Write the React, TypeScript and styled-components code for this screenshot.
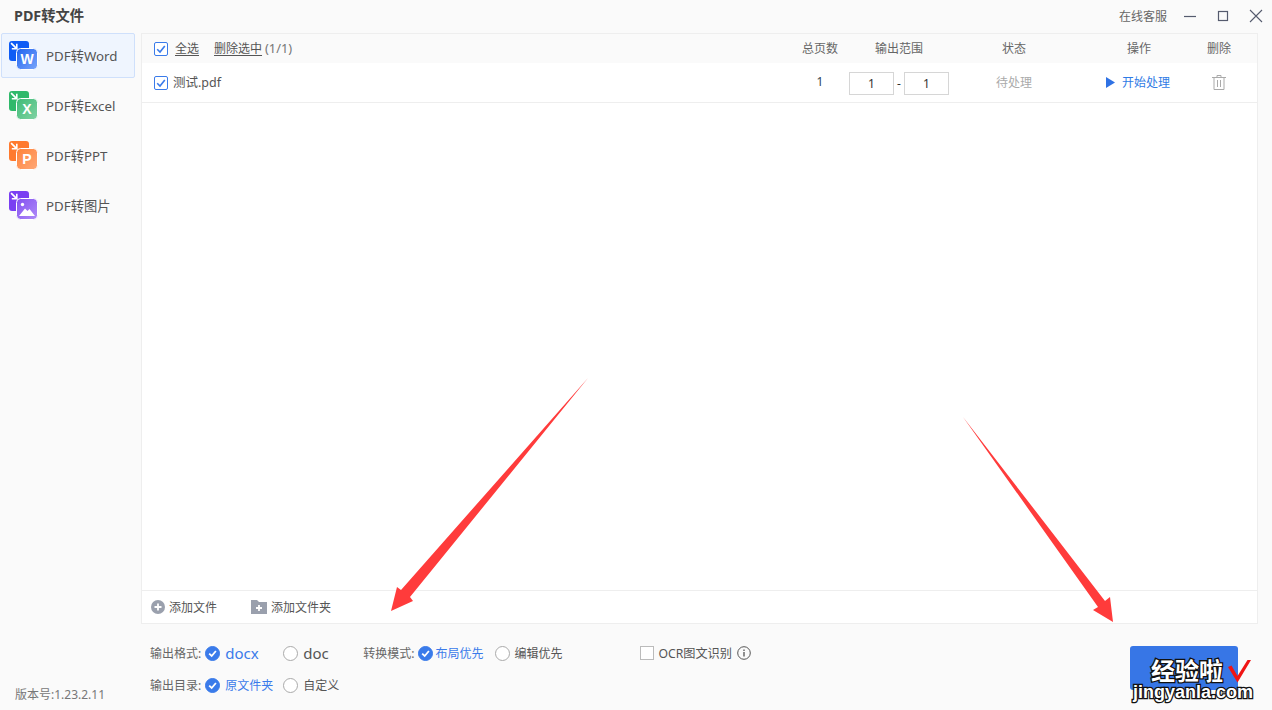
import React from 'react';
import styled, { createGlobalStyle } from 'styled-components';

const GlobalStyle = createGlobalStyle`
  html, body {
    margin: 0;
    padding: 0;
    background: #fafafa;
  }
  * {
    box-sizing: border-box;
  }
`;

const Window = styled.div`
  position: relative;
  width: 1272px;
  height: 710px;
  overflow: hidden;
  background: #fafafa;
  color: #555;
  font-family: 'Noto Sans', 'Noto Sans CJK SC', sans-serif;
  font-size: 12px;
`;

const TitleBar = styled.div`
  height: 33px;
  display: flex;
  align-items: center;
  justify-content: space-between;
  padding: 0 7px 2px 14px;
`;

const Title = styled.div`
  padding-bottom: 2px;
  font-size: 14.3px;
  font-weight: 700;
  color: #444;
`;

const WindowActions = styled.div`
  display: flex;
  align-items: center;
  color: #666;
`;

const ServiceLink = styled.span`
  margin-right: 14px;
  font-size: 12px;
`;

const WindowButton = styled.button`
  width: 18px;
  height: 18px;
  padding: 0;
  margin-left: 15px;
  border: 0;
  background: none;
  display: flex;
  align-items: center;
  justify-content: center;
  &:first-of-type {
    margin-left: 0;
  }
`;

const Body = styled.div`
  display: flex;
  height: 677px;
`;

const Sidebar = styled.div`
  width: 141px;
  padding-left: 1px;
  display: flex;
  flex-direction: column;
`;

const NavList = styled.div`
  flex: 1;
  display: flex;
  flex-direction: column;
  gap: 5px;
`;

const NavItem = styled.div<{ $active?: boolean }>`
  width: 134px;
  height: 45px;
  display: flex;
  align-items: center;
  gap: 8px;
  padding-left: 7px;
  font-size: 13.3px;
  color: #555;
  border-radius: 2px;
  border: 1px solid ${(p) => (p.$active ? '#cfe0fb' : 'transparent')};
  background: ${(p) => (p.$active ? '#eff5fe' : 'transparent')};
`;

const Version = styled.div`
  padding: 0 0 7px 14px;
  font-size: 12px;
  color: #777;
`;

const Content = styled.div`
  width: 1117px;
  display: flex;
  flex-direction: column;
`;

const Panel = styled.div`
  height: 591px;
  display: flex;
  flex-direction: column;
  background: #fff;
  border: 1px solid #eee;
`;

const Columns = '647px 60px 100px 130px 120px 40px';

const HeaderRow = styled.div`
  height: 29px;
  display: grid;
  grid-template-columns: ${Columns};
  align-items: center;
  background: #fafafa;
  color: #666;
  font-size: 12px;
  text-align: center;
`;

const HeaderCell = styled.span<{ $shift?: number }>`
  padding-left: ${(p) => p.$shift ?? 0}px;
  padding-bottom: 2px;
`;

const FileRow = styled.div`
  height: 40px;
  display: grid;
  grid-template-columns: ${Columns};
  align-items: center;
  border-bottom: 1px solid #eee;
  text-align: center;
`;

const SelectCell = styled.div`
  display: flex;
  align-items: center;
  padding-left: 12px;
  text-align: left;
`;

const Check = styled.span`
  width: 14px;
  height: 14px;
  flex: none;
  border: 1px solid #3a7bea;
  border-radius: 2px;
  background: #fff;
  display: flex;
  align-items: center;
  justify-content: center;
`;

const HeaderLink = styled.span<{ $gap: number }>`
  margin-left: ${(p) => p.$gap}px;
  padding-bottom: 2px;
  font-size: 12px;
  color: #555;
  text-decoration: underline;
  text-underline-offset: 2px;
`;

const Count = styled.span`
  margin-left: 3px;
  padding-bottom: 2px;
  font-size: 12.8px;
  color: #777;
`;

const FileName = styled.span`
  margin-left: 5px;
  padding-bottom: 2px;
  font-size: 12.5px;
  color: #555;
`;

const Pages = styled.span`
  padding: 0 0 2px 2px;
  font-size: 12px;
  color: #345;
`;

const RangeCell = styled.div`
  display: flex;
  align-items: center;
  padding-top: 2px;
  color: #333;
`;

const RangeInput = styled.div`
  width: 45px;
  height: 23px;
  border: 1px solid #d6d6d6;
  background: #fff;
  display: flex;
  align-items: center;
  justify-content: center;
  font-size: 12px;
`;

const RangeDash = styled.span`
  width: 10px;
  text-align: center;
  font-size: 12px;
`;

const Status = styled.span`
  padding-bottom: 2px;
  font-size: 12px;
  color: #aaa;
`;

const StartAction = styled.div`
  display: flex;
  align-items: center;
  justify-content: center;
  gap: 7px;
  padding: 0 2px 1px 0;
  font-size: 12px;
  color: #2f7be5;
`;

const DeleteCell = styled.div`
  display: flex;
  justify-content: center;
`;

const Spacer = styled.div`
  flex: 1;
`;

const PanelFooter = styled.div`
  height: 33px;
  display: flex;
  align-items: center;
  padding-left: 9px;
  gap: 34px;
  border-top: 1px solid #eee;
`;

const AddButton = styled.div`
  display: flex;
  align-items: center;
  gap: 4px;
  font-size: 12px;
  color: #555;
`;

const Options = styled.div`
  flex: 1;
  display: flex;
  justify-content: space-between;
  padding: 0 20px 0 9px;
`;

const OptionRows = styled.div`
  padding-top: 19px;
  display: flex;
  flex-direction: column;
  gap: 12px;
`;

const OptionRow = styled.div`
  height: 20px;
  display: flex;
  align-items: center;
`;

const OptionLabel = styled.span`
  font-size: 12px;
  color: #666;
  margin-right: 4px;
`;

const Radio = styled.span<{ $on?: boolean }>`
  width: 15px;
  height: 15px;
  flex: none;
  border-radius: 50%;
  background: ${(p) => (p.$on ? '#3a7bea' : '#fff')};
  border: 1px solid ${(p) => (p.$on ? '#3a7bea' : '#aaa')};
  display: flex;
  align-items: center;
  justify-content: center;
`;

const RadioText = styled.span<{ $on?: boolean; $big?: boolean; $gap: number; $width: number }>`
  width: ${(p) => p.$width}px;
  margin-left: ${(p) => p.$gap}px;
  font-size: ${(p) => (p.$big ? 15 : 12)}px;
  color: ${(p) => (p.$on ? '#3a7bea' : '#555')};
  white-space: nowrap;
`;

const OcrBox = styled.span`
  width: 14px;
  height: 14px;
  margin-left: 78px;
  border: 1px solid #bbb;
  background: #fff;
`;

const OcrText = styled.span`
  margin: 0 5px 0 4px;
  font-size: 12.2px;
  color: #555;
`;

const StartButton = styled.button`
  width: 108px;
  height: 44px;
  margin-top: 22px;
  border: 0;
  border-radius: 3px;
  background: #3776e6;
`;

const Arrow = styled.svg`
  position: absolute;
  left: 0;
  top: 0;
  pointer-events: none;
`;

const Watermark = styled.div`
  position: absolute;
  left: 1132px;
  top: 658px;
  width: 130px;
  display: flex;
  flex-direction: column;
  font-family: 'Liberation Sans', 'Noto Sans CJK SC', sans-serif;
  font-weight: 700;
  color: #fff;
  -webkit-text-stroke: 2.6px #111;
  paint-order: stroke fill;
`;

const MarkTitle = styled.span`
  margin-left: 19px;
  font-size: 24px;
  line-height: 28px;
`;

const MarkUrl = styled.span`
  margin-left: 1px;
  font-size: 18px;
  line-height: 12px;
  white-space: nowrap;
`;

const MarkTick = styled.svg`
  position: absolute;
  left: 95px;
  top: 1px;
`;

const CheckMark = () => (
  <svg width="10" height="10" viewBox="0 0 10 10">
    <path d="M1.2 5.2 4 8 8.8 2" fill="none" stroke="#3a7bea" strokeWidth="1.6" />
  </svg>
);

const RadioTick = () => (
  <svg width="11" height="11" viewBox="0 0 11 11">
    <path d="M2.2 5.6 4.7 8 8.9 3" fill="none" stroke="#fff" strokeWidth="1.8" />
  </svg>
);

type NavIconProps = { back: string; front: string; frontEnd: string; letter?: string };

const NavIcon: React.FC<NavIconProps> = ({ back, front, frontEnd, letter }) => {
  const id = `g${back.slice(1)}`;
  return (
    <svg width="29" height="29" viewBox="0 0 29 29" style={{ flex: 'none' }}>
      <defs>
        <linearGradient id={id} x1="0" y1="0" x2="1" y2="1">
          <stop offset="0" stopColor={front} />
          <stop offset="1" stopColor={frontEnd} />
        </linearGradient>
      </defs>
      <rect x="0" y="0" width="20" height="20" rx="3" fill={back} />
      <path d="M1.5 2.7 2.7 1.5 7 5.8V2.8h1.6v5.8H2.8V7h3z" fill="#fff" />
      <rect x="7.5" y="7.5" width="21" height="21" rx="4" fill={`url(#${id})`} stroke="#fff" strokeWidth="1" />
      {letter ? (
        <text x="18" y="23" textAnchor="middle" fontSize="14" fontWeight="700" fill="#fff" fontFamily="'Liberation Sans', sans-serif">
          {letter}
        </text>
      ) : (
        <g fill="#fff">
          <circle cx="13.5" cy="13.5" r="1.7" />
          <path d="M10 25l6-7.5 2.5 2.5 2-2 5.5 7z" />
        </g>
      )}
    </svg>
  );
};

const navItems = [
  { label: 'PDF转Word', back: '#0f5cf5', front: '#1f63ef', frontEnd: '#7ba6fb', letter: 'W', active: true },
  { label: 'PDF转Excel', back: '#2fb96a', front: '#3dbb76', frontEnd: '#82d3a4', letter: 'X' },
  { label: 'PDF转PPT', back: '#ff7a2e', front: '#ff8238', frontEnd: '#ffa877', letter: 'P' },
  { label: 'PDF转图片', back: '#7a3ff2', front: '#8350f0', frontEnd: '#b08cf8' },
];

const App: React.FC = () => (
  <Window>
    <GlobalStyle />
    <TitleBar>
      <Title>PDF转文件</Title>
      <WindowActions>
        <ServiceLink>在线客服</ServiceLink>
        <WindowButton>
          <svg width="14" height="14" viewBox="0 0 14 14">
            <path d="M1 7.5h12" stroke="#555b6e" strokeWidth="1.2" />
          </svg>
        </WindowButton>
        <WindowButton>
          <svg width="12" height="12" viewBox="0 0 12 12">
            <rect x="1.5" y="1.5" width="9" height="9" fill="none" stroke="#555b6e" strokeWidth="1.2" />
          </svg>
        </WindowButton>
        <WindowButton>
          <svg width="14" height="14" viewBox="0 0 14 14">
            <path d="M1 1l12 12M13 1L1 13" stroke="#555b6e" strokeWidth="1.1" />
          </svg>
        </WindowButton>
      </WindowActions>
    </TitleBar>
    <Body>
      <Sidebar>
        <NavList>
          {navItems.map((item) => (
            <NavItem key={item.label} $active={item.active}>
              <NavIcon back={item.back} front={item.front} frontEnd={item.frontEnd} letter={item.letter} />
              {item.label}
            </NavItem>
          ))}
        </NavList>
        <Version>版本号:1.23.2.11</Version>
      </Sidebar>
      <Content>
        <Panel>
          <HeaderRow>
            <SelectCell>
              <Check>
                <CheckMark />
              </Check>
              <HeaderLink $gap={7}>全选</HeaderLink>
              <HeaderLink $gap={15}>删除选中</HeaderLink>
              <Count>(1/1)</Count>
            </SelectCell>
            <HeaderCell $shift={2}>总页数</HeaderCell>
            <HeaderCell>输出范围</HeaderCell>
            <HeaderCell>状态</HeaderCell>
            <HeaderCell>操作</HeaderCell>
            <HeaderCell>删除</HeaderCell>
          </HeaderRow>
          <FileRow>
            <SelectCell>
              <Check>
                <CheckMark />
              </Check>
              <FileName>测试.pdf</FileName>
            </SelectCell>
            <Pages>1</Pages>
            <RangeCell>
              <RangeInput>1</RangeInput>
              <RangeDash>-</RangeDash>
              <RangeInput>1</RangeInput>
            </RangeCell>
            <Status>待处理</Status>
            <StartAction>
              <svg width="9" height="11" viewBox="0 0 9 11">
                <path d="M0 0l9 5.5L0 11z" fill="#2f72e4" />
              </svg>
              开始处理
            </StartAction>
            <DeleteCell>
              <svg width="14" height="15" viewBox="0 0 14 15" fill="none" stroke="#aaa" strokeWidth="1">
                <path d="M0 2.5h14M5 2.5V.5h4v2M2 2.5v12h10v-12M5.5 5v7M8.5 5v7" />
              </svg>
            </DeleteCell>
          </FileRow>
          <Spacer />
          <PanelFooter>
            <AddButton>
              <svg width="14" height="14" viewBox="0 0 14 14">
                <circle cx="7" cy="7" r="7" fill="#9aa0ad" />
                <path d="M7 3.5v7M3.5 7h7" stroke="#fff" strokeWidth="1.8" />
              </svg>
              添加文件
            </AddButton>
            <AddButton>
              <svg width="16" height="14" viewBox="0 0 16 14">
                <path d="M0 0h6l2 2h8v12H0z" fill="#9aa0ad" />
                <path d="M8 5v6M5 8h6" stroke="#fff" strokeWidth="1.8" />
              </svg>
              添加文件夹
            </AddButton>
          </PanelFooter>
        </Panel>
        <Options>
          <OptionRows>
            <OptionRow>
              <OptionLabel>输出格式:</OptionLabel>
              <Radio $on>
                <RadioTick />
              </Radio>
              <RadioText $on $big $gap={5} $width={58}>docx</RadioText>
              <Radio />
              <RadioText $big $gap={5} $width={60}>doc</RadioText>
              <OptionLabel>转换模式:</OptionLabel>
              <Radio $on>
                <RadioTick />
              </Radio>
              <RadioText $on $gap={2} $width={60}>布局优先</RadioText>
              <Radio />
              <RadioText $gap={4} $width={48}>编辑优先</RadioText>
              <OcrBox />
              <OcrText>OCR图文识别</OcrText>
              <svg width="14" height="14" viewBox="0 0 14 14" fill="none" stroke="#555">
                <circle cx="7" cy="7" r="6.3" />
                <path d="M7 6v4.5M7 3.5v1.4" strokeWidth="1.3" />
              </svg>
            </OptionRow>
            <OptionRow>
              <OptionLabel>输出目录:</OptionLabel>
              <Radio $on>
                <RadioTick />
              </Radio>
              <RadioText $on $gap={5} $width={58}>原文件夹</RadioText>
              <Radio />
              <RadioText $gap={5} $width={48}>自定义</RadioText>
            </OptionRow>
          </OptionRows>
          <StartButton />
        </Options>
      </Content>
    </Body>
    <Arrow width="1272" height="710" viewBox="0 0 1272 710">
      <path d="M588 378 401 590 397 587 391 611 413 601 410 597z" fill="#ff3b3b" />
      <path d="M963 417 1105 601 1110 597 1113 622 1093 610 1098 607z" fill="#ff3b3b" />
    </Arrow>
    <Watermark>
      <MarkTitle>经验啦</MarkTitle>
      <MarkUrl>jingyanla.com</MarkUrl>
      <MarkTick width="24" height="24" viewBox="0 0 24 24">
        <path d="M1 8 4.5 6.5 10.5 17 20.5 1H24L10.5 23.5z" fill="#f01414" />
      </MarkTick>
    </Watermark>
  </Window>
);

export default App;
